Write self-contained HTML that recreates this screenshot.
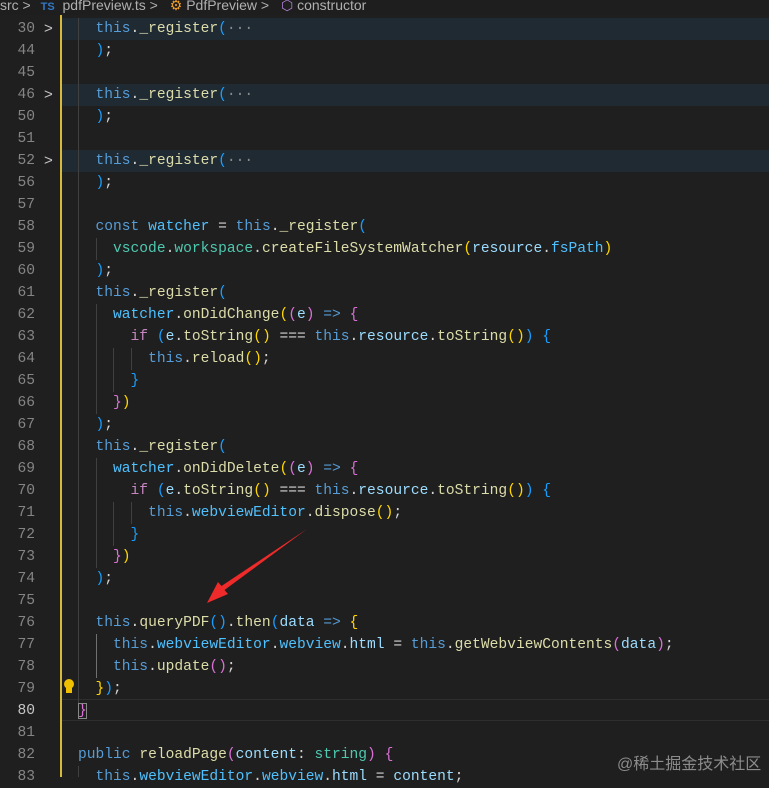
<!DOCTYPE html>
<html><head><meta charset="utf-8"><style>
html,body{margin:0;padding:0;width:769px;height:777px;overflow:hidden;background:#1f1f1f;}
.bc{position:absolute;left:0;top:-3px;width:769px;height:18px;background:#1e1e1e;font:14px "Liberation Sans",sans-serif;color:#b0b0b0;line-height:16px;white-space:nowrap;overflow:hidden;}
.ln{position:absolute;left:0;width:35px;text-align:right;font:14.6px "Liberation Mono",monospace;color:#858585;line-height:22px;}
.cd{position:absolute;left:78px;font:14.6px "Liberation Mono",monospace;color:#d4d4d4;line-height:22px;white-space:pre;}
.hl{position:absolute;left:62px;width:707px;height:22px;background:#1f2a33;}
.k{color:#569cd6}.f{color:#dcdcaa}.v{color:#9cdcfe}.c{color:#4fc1ff}.t{color:#4ec9b0}.p{color:#c586c0}
.g{color:#ffd700}.m{color:#da70d6}.b{color:#179fff}.e{color:#8a8a8a}
.ig{position:absolute;width:1px;background:#404040;}
.chev{position:absolute;left:44px;font:15px "Liberation Sans",sans-serif;color:#c5c5c5;line-height:22px;}
</style></head><body>
<div class="bc"><span>src &gt; </span><span style="display:inline-block;width:16px;color:#3178c6;font-weight:bold;font-size:11px;margin-left:6px">TS</span> <span style="margin-left:2px">pdfPreview.ts</span> &gt; <span style="color:#ee9d28;margin-left:8px">⚙</span> PdfPreview &gt; <span style="color:#b180d7;margin-left:8px">⬡</span> constructor</div>
<div style="position:absolute;left:60px;top:15px;width:2px;height:762px;background:#d7ba3c"></div>
<div class="hl" style="top:18px"></div>
<div class="hl" style="top:84px"></div>
<div class="hl" style="top:150px"></div>
<div style="position:absolute;left:62px;top:699px;width:707px;height:20px;border-top:1px solid #2e2e2e;border-bottom:1px solid #2e2e2e"></div>
<div class="ig" style="left:78px;top:18px;height:700px"></div>
<div class="ig" style="left:96px;top:238px;height:22px"></div>
<div class="ig" style="left:96px;top:304px;height:110px"></div>
<div class="ig" style="left:113px;top:348px;height:44px"></div>
<div class="ig" style="left:131px;top:348px;height:22px"></div>
<div class="ig" style="left:96px;top:458px;height:110px"></div>
<div class="ig" style="left:113px;top:502px;height:44px"></div>
<div class="ig" style="left:131px;top:502px;height:22px"></div>
<div class="ig" style="left:96px;top:634px;height:44px;background:#707070"></div>
<div class="ig" style="left:78px;top:766px;height:11px"></div>
<div class="chev" style="top:18px">&gt;</div><div class="chev" style="top:84px">&gt;</div><div class="chev" style="top:150px">&gt;</div>

<div class="ln" style="top:18px">30</div><div class="cd" style="top:18px">  <span class="k">this</span>.<span class="f">_register</span><span class="b">(</span><span class="e">···</span></div>
<div class="ln" style="top:40px">44</div><div class="cd" style="top:40px">  <span class="b">)</span>;</div>
<div class="ln" style="top:62px">45</div>
<div class="ln" style="top:84px">46</div><div class="cd" style="top:84px">  <span class="k">this</span>.<span class="f">_register</span><span class="b">(</span><span class="e">···</span></div>
<div class="ln" style="top:106px">50</div><div class="cd" style="top:106px">  <span class="b">)</span>;</div>
<div class="ln" style="top:128px">51</div>
<div class="ln" style="top:150px">52</div><div class="cd" style="top:150px">  <span class="k">this</span>.<span class="f">_register</span><span class="b">(</span><span class="e">···</span></div>
<div class="ln" style="top:172px">56</div><div class="cd" style="top:172px">  <span class="b">)</span>;</div>
<div class="ln" style="top:194px">57</div>
<div class="ln" style="top:216px">58</div><div class="cd" style="top:216px">  <span class="k">const</span> <span class="c">watcher</span> = <span class="k">this</span>.<span class="f">_register</span><span class="b">(</span></div>
<div class="ln" style="top:238px">59</div><div class="cd" style="top:238px">    <span class="t">vscode</span>.<span class="t">workspace</span>.<span class="f">createFileSystemWatcher</span><span class="g">(</span><span class="v">resource</span>.<span class="c">fsPath</span><span class="g">)</span></div>
<div class="ln" style="top:260px">60</div><div class="cd" style="top:260px">  <span class="b">)</span>;</div>
<div class="ln" style="top:282px">61</div><div class="cd" style="top:282px">  <span class="k">this</span>.<span class="f">_register</span><span class="b">(</span></div>
<div class="ln" style="top:304px">62</div><div class="cd" style="top:304px">    <span class="c">watcher</span>.<span class="f">onDidChange</span><span class="g">(</span><span class="m">(</span><span class="v">e</span><span class="m">)</span> <span class="k">=&gt;</span> <span class="m">{</span></div>
<div class="ln" style="top:326px">63</div><div class="cd" style="top:326px">      <span class="p">if</span> <span class="b">(</span><span class="v">e</span>.<span class="f">toString</span><span class="g">()</span> === <span class="k">this</span>.<span class="v">resource</span>.<span class="f">toString</span><span class="g">()</span><span class="b">)</span> <span class="b">{</span></div>
<div class="ln" style="top:348px">64</div><div class="cd" style="top:348px">        <span class="k">this</span>.<span class="f">reload</span><span class="g">()</span>;</div>
<div class="ln" style="top:370px">65</div><div class="cd" style="top:370px">      <span class="b">}</span></div>
<div class="ln" style="top:392px">66</div><div class="cd" style="top:392px">    <span class="m">}</span><span class="g">)</span></div>
<div class="ln" style="top:414px">67</div><div class="cd" style="top:414px">  <span class="b">)</span>;</div>
<div class="ln" style="top:436px">68</div><div class="cd" style="top:436px">  <span class="k">this</span>.<span class="f">_register</span><span class="b">(</span></div>
<div class="ln" style="top:458px">69</div><div class="cd" style="top:458px">    <span class="c">watcher</span>.<span class="f">onDidDelete</span><span class="g">(</span><span class="m">(</span><span class="v">e</span><span class="m">)</span> <span class="k">=&gt;</span> <span class="m">{</span></div>
<div class="ln" style="top:480px">70</div><div class="cd" style="top:480px">      <span class="p">if</span> <span class="b">(</span><span class="v">e</span>.<span class="f">toString</span><span class="g">()</span> === <span class="k">this</span>.<span class="v">resource</span>.<span class="f">toString</span><span class="g">()</span><span class="b">)</span> <span class="b">{</span></div>
<div class="ln" style="top:502px">71</div><div class="cd" style="top:502px">        <span class="k">this</span>.<span class="c">webviewEditor</span>.<span class="f">dispose</span><span class="g">()</span>;</div>
<div class="ln" style="top:524px">72</div><div class="cd" style="top:524px">      <span class="b">}</span></div>
<div class="ln" style="top:546px">73</div><div class="cd" style="top:546px">    <span class="m">}</span><span class="g">)</span></div>
<div class="ln" style="top:568px">74</div><div class="cd" style="top:568px">  <span class="b">)</span>;</div>
<div class="ln" style="top:590px">75</div>
<div class="ln" style="top:612px">76</div><div class="cd" style="top:612px">  <span class="k">this</span>.<span class="f">queryPDF</span><span class="b">()</span>.<span class="f">then</span><span class="b">(</span><span class="v">data</span> <span class="k">=&gt;</span> <span class="g">{</span></div>
<div class="ln" style="top:634px">77</div><div class="cd" style="top:634px">    <span class="k">this</span>.<span class="c">webviewEditor</span>.<span class="c">webview</span>.<span class="v">html</span> = <span class="k">this</span>.<span class="f">getWebviewContents</span><span class="m">(</span><span class="v">data</span><span class="m">)</span>;</div>
<div class="ln" style="top:656px">78</div><div class="cd" style="top:656px">    <span class="k">this</span>.<span class="f">update</span><span class="m">()</span>;</div>
<div class="ln" style="top:678px">79</div><div class="cd" style="top:678px">  <span class="g">}</span><span class="b">)</span>;</div>
<div class="ln" style="top:700px;color:#c6c6c6">80</div><div class="cd" style="top:700px"><span class="m" style="outline:1px solid #888;outline-offset:-1px">}</span></div>
<div class="ln" style="top:722px">81</div>
<div class="ln" style="top:744px">82</div><div class="cd" style="top:744px"><span class="k">public</span> <span class="f">reloadPage</span><span class="m">(</span><span class="v">content</span>: <span class="t">string</span><span class="m">)</span> <span class="m">{</span></div>
<div class="ln" style="top:766px">83</div><div class="cd" style="top:766px">  <span class="k">this</span>.<span class="c">webviewEditor</span>.<span class="c">webview</span>.<span class="v">html</span> = <span class="v">content</span>;</div>

<svg style="position:absolute;left:0;top:0" width="769" height="777">
<g fill="#f0c000"><circle cx="69" cy="684" r="5"/><rect x="66" y="688" width="6" height="5"/></g>
<polygon fill="#ee2a2a" points="207,603 218,582 221.5,586 307,529 224.5,590 228,594"/>
</svg>
<div style="position:absolute;left:617px;top:750px;font:16px 'Liberation Sans','Noto Sans CJK SC',sans-serif;color:#8c8c8c">@稀土掘金技术社区</div>
</body></html>
